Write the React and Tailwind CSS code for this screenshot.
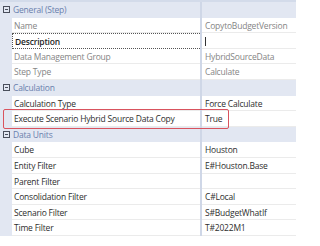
import React from "react";

const rows = [
  { type: "cat", label: "General (Step)" },
  { label: "Name", value: "CopytoBudgetVersion", ro: true },
  { label: "Description", value: "", focus: true },
  { label: "Data Management Group", value: "HybridSourceData", ro: true },
  { label: "Step Type", value: "Calculate", ro: true },
  { type: "cat", label: "Calculation" },
  { label: "Calculation Type", value: "Force Calculate" },
  { label: "Execute Scenario Hybrid Source Data Copy", value: "True" },
  { type: "cat", label: "Data Units" },
  { label: "Cube", value: "Houston" },
  { label: "Entity Filter", value: "E#Houston.Base" },
  { label: "Parent Filter", value: "" },
  { label: "Consolidation Filter", value: "C#Local" },
  { label: "Scenario Filter", value: "S#BudgetWhatIf" },
  { label: "Time Filter", value: "T#2022M1" },
];

function Minus() {
  return (
    <svg width="7" height="7" viewBox="0 0 7 7" className="block">
      <rect x="0.5" y="0.5" width="6" height="6" fill="none" stroke="#4a4f5c" strokeWidth="1" />
      <line x1="2" y1="3.5" x2="5" y2="3.5" stroke="#4a4f5c" strokeWidth="1" />
    </svg>
  );
}

export default function App() {
  return (
    <div
      className="relative w-[296px] h-[246px] bg-white overflow-hidden text-[8.5px] tracking-[-0.2px] leading-none"
      style={{ fontFamily: '"Open Sans", "Noto Sans", sans-serif' }}
    >
      <div className="h-[2px] bg-[#d3dbea]" />
      {rows.map((r, i) =>
        r.type === "cat" ? (
          <div key={i} className="flex h-[15.6px] items-center bg-[#e2e7f2]">
            <div className="w-[12px] flex justify-center pl-[1px]">
              <Minus />
            </div>
            <div className="w-[188px] pl-[1px] pt-[1px] text-[#6a80ad]">{r.label}</div>
            <div className="w-[2px] self-stretch bg-[#cfd7e7]" />
          </div>
        ) : (
          <div key={i} className="flex h-[15.6px]">
            <div className="w-[12px] bg-[#e2e7f2]" />
            <div
              className={
                "w-[188px] flex items-center pl-[2px] pt-[2px] border-b border-[#ebebeb] " +
                (r.focus
                  ? "border-dotted border-t border-l border-b-[#555] border-t-[#555] border-l-[#555] font-semibold text-[#1f1f1f]"
                  : r.ro
                  ? "text-[#858585]"
                  : "text-[#2e2e2e]")
              }
            >
              {r.label}
            </div>
            <div className="w-[2px] bg-[#cfd7e7]" />
            <div
              className={
                "flex-1 flex items-center pl-[3px] pt-[2px] border-b border-[#ebebeb] " +
                (r.ro ? "text-[#858585]" : "text-[#2e2e2e]")
              }
            >
              {r.focus ? <span className="w-px h-[9px] bg-[#333]" /> : r.value}
            </div>
          </div>
        )
      )}
      <div className="absolute left-[3px] top-[109px] w-[226px] h-[20px] border-[1.5px] border-[#d9535e] rounded-[2px]" />
    </div>
  );
}
